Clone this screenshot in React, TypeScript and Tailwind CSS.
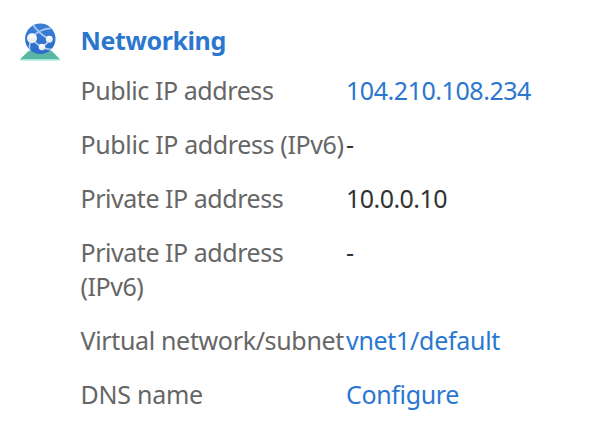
const rows = [
  { label: 'Public IP address', value: '104.210.108.234', link: true, lt: 'tracking-[-0.42px]', vt: 'tracking-[-0.45px]' },
  { label: 'Public IP address (IPv6)', value: '-', lt: 'tracking-[-0.38px]', vt: '' },
  { label: 'Private IP address', value: '10.0.0.10', lt: 'tracking-[-0.46px]', vt: 'tracking-[-0.55px]' },
  { label: 'Private IP address (IPv6)', value: '-', lt: 'tracking-[-0.46px]', vt: '' },
  { label: 'Virtual network/subnet', value: 'vnet1/default', link: true, lt: 'tracking-[-0.34px]', vt: 'tracking-[-0.3px]' },
  { label: 'DNS name', value: 'Configure', link: true, lt: 'tracking-[-0.25px]', vt: 'tracking-[-0.36px]' },
];

function NetworkIcon() {
  return (
    <svg className="h-10 w-10 shrink-0" viewBox="0 0 40 40">
      <defs>
        <linearGradient id="globe" x1="0" y1="0" x2="0" y2="1">
          <stop offset="0" stopColor="#3a80d8" />
          <stop offset="1" stopColor="#2a6cc9" />
        </linearGradient>
        <linearGradient id="node" x1="0" y1="0" x2="0" y2="1">
          <stop offset="0" stopColor="#ffffff" />
          <stop offset="1" stopColor="#e2e6ea" />
        </linearGradient>
        <clipPath id="disc">
          <circle cx="20.3" cy="16.7" r="15.2" />
        </clipPath>
      </defs>
      <path d="M8.8 28.7h22.8L40 37.2H0z" fill="#5ab5a3" />
      <path d="M0 37.2h40v.7q0 .6-.8.6H.8q-.8 0-.8-.6z" fill="#87e8cf" />
      <circle cx="20.3" cy="16.7" r="15.2" fill="url(#globe)" />
      <g clipPath="url(#disc)" fill="none" stroke="#a9caf2" strokeWidth="1.7">
        <path d="M11.8 16.2C16 10 22 6.8 31.5 6.2" />
        <path d="M13 2.5Q18 11 29.3 17.2" />
        <path d="M11.8 16.2Q16 22 21.8 25" />
        <path d="M21.8 25Q27.5 28 32 27" />
        <path d="M29.5 17.2Q27.5 22 21.8 25" />
        <path d="M11.8 16.2Q9 21 9.5 29" />
      </g>
      <circle cx="12" cy="16.3" r="5" fill="url(#node)" />
      <circle cx="29.3" cy="17.2" r="3.4" fill="url(#node)" />
      <circle cx="21.9" cy="25.1" r="3.3" fill="url(#node)" />
    </svg>
  );
}

export default function App() {
  return (
    <div className="flex h-[428px] w-[610px] bg-white pl-5 pt-[22px] font-['Noto_Sans',sans-serif] text-[25px] leading-[34px]">
      <NetworkIcon />
      <div className="ml-[20.5px] w-[500px] pt-px">
        <h2 className="font-bold tracking-[-0.4px] text-[#2b77d0]">Networking</h2>
        <dl className="mt-4 flex flex-col gap-5">
          {rows.map((r) => (
            <div key={r.label} className="flex">
              <dt className={`w-[265.5px] shrink-0 text-[#666] ${r.lt}`}>{r.label}</dt>
              <dd className={`${r.link ? 'text-[#2b77d0]' : 'text-[#333]'} ${r.vt}`}>{r.value}</dd>
            </div>
          ))}
        </dl>
      </div>
    </div>
  );
}
